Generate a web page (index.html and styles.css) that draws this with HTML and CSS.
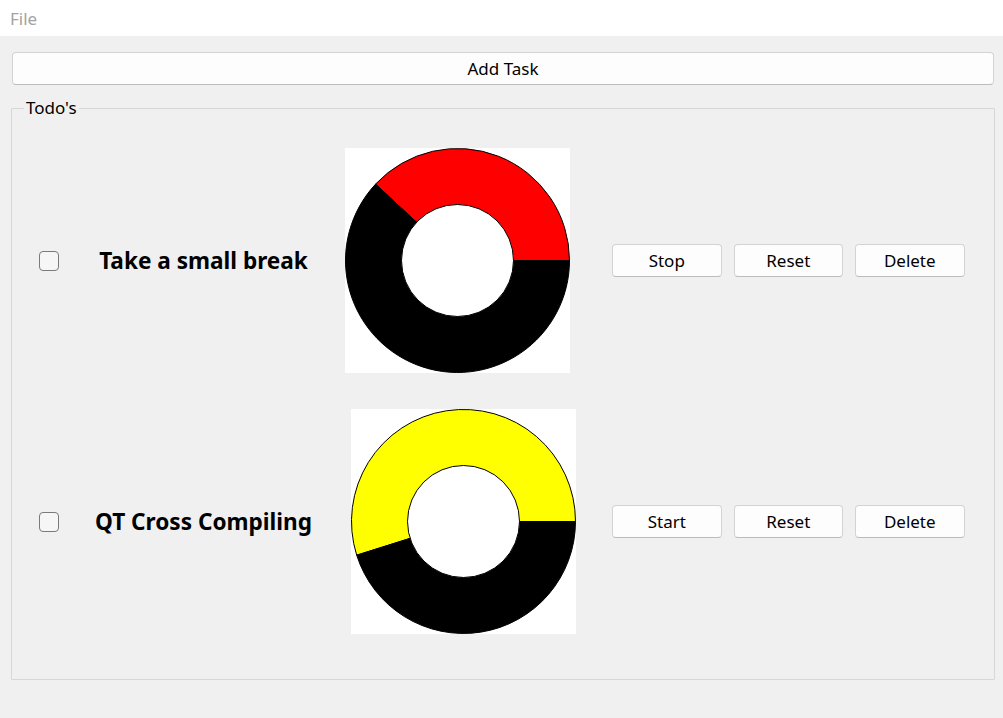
FILE: index.html
```html
<!DOCTYPE html>
<html>
<head>
<meta charset="utf-8">
<link rel="stylesheet" href="styles.css">
</head>
<body>
<div class="menubar"><span class="menu-item">File</span></div>
<main class="main">
  <button class="btn add-task">Add Task</button>
  <fieldset class="group">
    <legend class="group-title">Todo's</legend>
    <div class="row">
      <input type="checkbox" class="check">
      <div class="task-label">Take a small break</div>
      <div class="donut-cell">
        <svg class="donut" width="225" height="225" viewBox="0 0 225 225">
          <rect width="225" height="225" fill="#fff"/>
          <path d="M112.5,112.5 L224.5,112.5 A112,112 0 0 0 30.6,36.1 Z" fill="#ff0000" stroke="#000" stroke-width="1"/>
          <path d="M112.5,112.5 L30.6,36.1 A112,112 0 1 0 224.5,112.5 Z" fill="#000" stroke="#000" stroke-width="1"/>
          <circle cx="112.5" cy="112.5" r="56" fill="#fff" stroke="#000" stroke-width="1"/>
        </svg>
      </div>
      <div class="actions">
        <button class="btn action">Stop</button>
        <button class="btn action">Reset</button>
        <button class="btn action">Delete</button>
      </div>
    </div>
    <div class="row">
      <input type="checkbox" class="check">
      <div class="task-label">QT Cross Compiling</div>
      <div class="donut-cell donut-cell--end">
        <svg class="donut" width="225" height="225" viewBox="0 0 225 225">
          <rect width="225" height="225" fill="#fff"/>
          <path d="M112.5,112.5 L224.5,112.5 A112,112 0 1 0 5.7,146.2 Z" fill="#ffff00" stroke="#000" stroke-width="1"/>
          <path d="M112.5,112.5 L5.7,146.2 A112,112 0 0 0 224.5,112.5 Z" fill="#000" stroke="#000" stroke-width="1"/>
          <circle cx="112.5" cy="112.5" r="56" fill="#fff" stroke="#000" stroke-width="1"/>
        </svg>
      </div>
      <div class="actions">
        <button class="btn action">Start</button>
        <button class="btn action">Reset</button>
        <button class="btn action">Delete</button>
      </div>
    </div>
  </fieldset>
</main>
</body>
</html>
```
FILE: styles.css
```css
* { box-sizing: border-box; }
html, body { margin: 0; padding: 0; }
body {
  width: 1003px;
  height: 718px;
  background: #f0f0f0;
  font-family: "Noto Sans", "Open Sans", "DejaVu Sans", sans-serif;
  font-size: 17px;
  color: #000;
  overflow: hidden;
}
.menubar {
  height: 36px;
  background: #fff;
  display: flex;
  align-items: center;
  padding-left: 10px;
}
.menu-item {
  color: #a3a3a3;
  font-size: 17px;
}
.main {
  padding: 16px 9px 0 11px;
}
.btn {
  font-family: inherit;
  font-size: 17px;
  color: #000;
  background: #fdfdfd;
  border: 1px solid #d3d3d3;
  border-bottom-color: #bcbcbc;
  border-radius: 4px;
  padding: 0;
  line-height: 20px;
}
.add-task {
  display: block;
  width: 982px;
  height: 33px;
  margin-left: 1px;
}
.group {
  margin: 13px 0 0 0;
  padding: 30px 0 45px 0;
  border: 1px solid #d7d7d7;
  border-radius: 1px;
  width: 984px;
}
.group-title {
  margin-left: 12px;
  padding: 0 2px;
  font-size: 17px;
  line-height: 20px;
}
.row {
  display: flex;
  align-items: center;
  height: 225px;
}
.row + .row {
  margin-top: 36px;
}
.check {
  appearance: none;
  -webkit-appearance: none;
  margin: 0 0 0 27px;
  width: 20px;
  height: 20px;
  border: 1px solid #7a7a7a;
  border-radius: 4px;
  background: #f6f6f6;
  flex: none;
}
.task-label {
  width: 267px;
  margin-left: 11px;
  text-align: center;
  font-weight: bold;
  font-size: 22.6px;
  white-space: nowrap;
}
.donut-cell {
  width: 231px;
  margin-left: 8px;
  display: flex;
  justify-content: flex-start;
}
.donut-cell--end {
  justify-content: flex-end;
}
.donut { display: block; }
.actions {
  margin-left: 36px;
  display: flex;
  gap: 12px;
}
.action {
  width: 109.5px;
  height: 33px;
}
```
